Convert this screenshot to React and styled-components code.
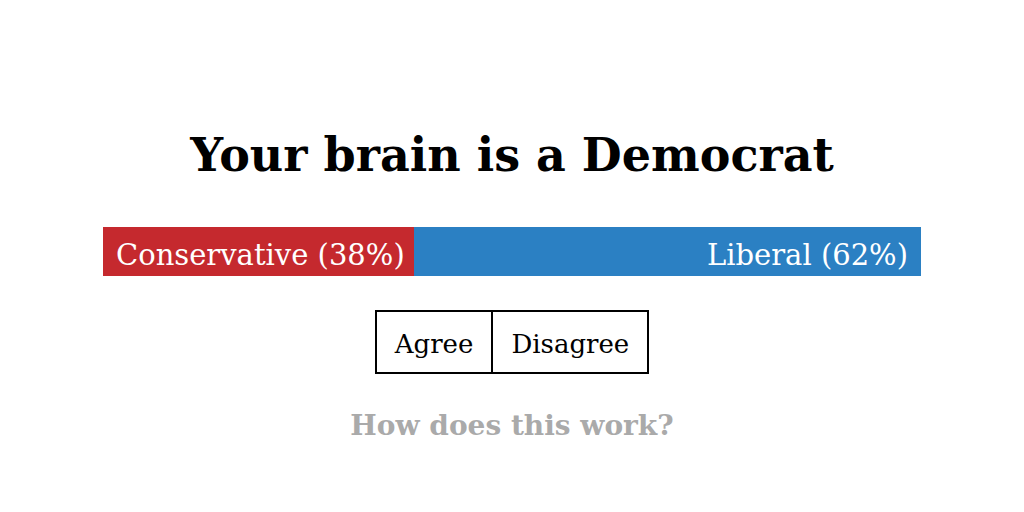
import React from 'react'
import styled, { createGlobalStyle } from 'styled-components'

const GlobalStyle = createGlobalStyle`
  body {
    margin: 0;
    background: #fff;
    font-family: "DejaVu Serif", "Liberation Serif", serif;
  }
`

const result = { conservative: 38, liberal: 62 }

const App = () => {
  return (
    <>
      <GlobalStyle />
      <Page>
        <Title>Your brain is a Democrat</Title>
        <Bar>
          <Segment $color='#c5292e' $align='flex-start' style={{ width: `${result.conservative}%` }}>
            Conservative ({result.conservative}%)
          </Segment>
          <Segment $color='#2b80c3' $align='flex-end' style={{ width: `${result.liberal}%` }}>
            Liberal ({result.liberal}%)
          </Segment>
        </Bar>
        <Choices>
          <Choice>Agree</Choice>
          <Choice>Disagree</Choice>
        </Choices>
        <HowLink href='#'>How does this work?</HowLink>
      </Page>
    </>
  )
}

const Page = styled.main`
  width: 1024px;
  height: 512px;
  display: flex;
  flex-direction: column;
  align-items: center;
  padding-top: 124px;
  box-sizing: border-box;
`

const Title = styled.h1`
  margin: 0;
  font-size: 46px;
  line-height: 62px;
  font-weight: bold;
  color: #000;
`

const Bar = styled.div`
  display: flex;
  width: 818px;
  height: 49px;
  margin-top: 41px;
`

const Segment = styled.div`
  display: flex;
  align-items: center;
  justify-content: ${p => p.$align};
  padding: 6px 13px 0;
  box-sizing: border-box;
  background: ${p => p.$color};
  color: #fff;
  font-size: 29px;
  white-space: nowrap;
`

const Choices = styled.div`
  display: flex;
  margin-top: 34px;
  border: 2px solid #000;
`

const Choice = styled.button`
  height: 60px;
  padding: 4px 18px 0;
  border: none;
  background: #fff;
  font-family: inherit;
  font-size: 26px;
  color: #000;

  & + & {
    border-left: 2px solid #000;
  }
`

const HowLink = styled.a`
  margin-top: 35px;
  font-size: 28px;
  font-weight: bold;
  color: #aaa;
  text-decoration: none;
`

export default App
